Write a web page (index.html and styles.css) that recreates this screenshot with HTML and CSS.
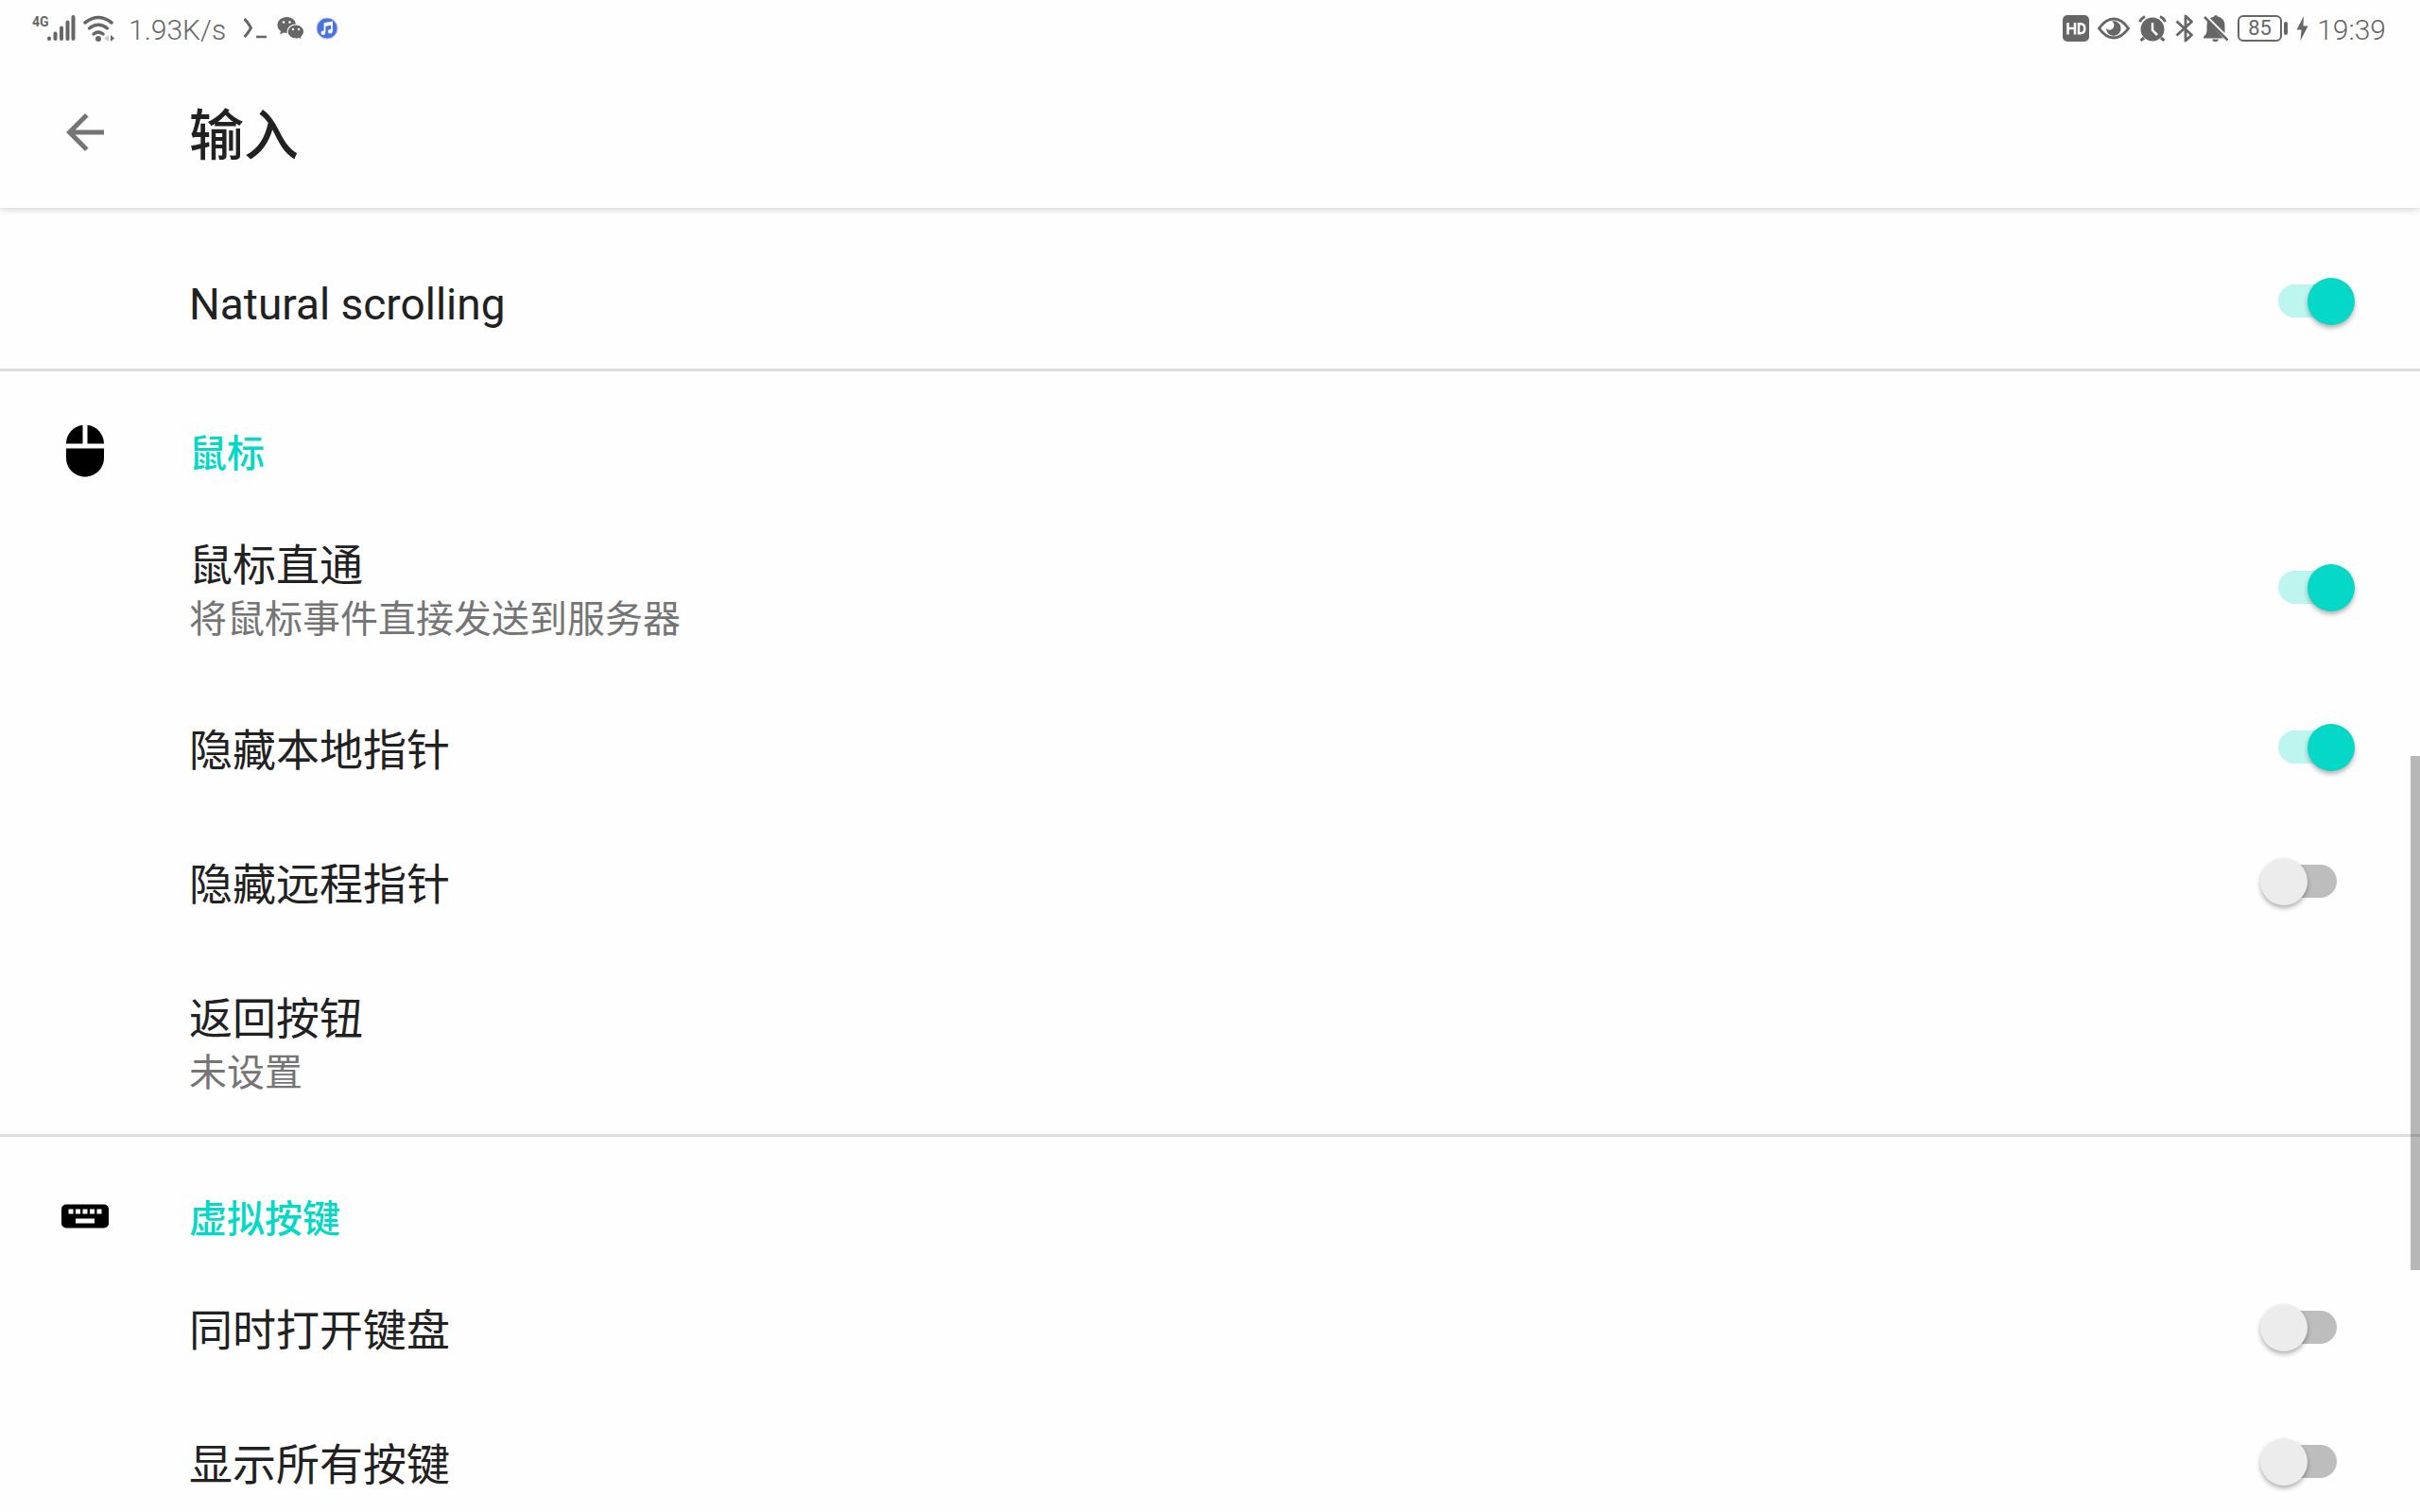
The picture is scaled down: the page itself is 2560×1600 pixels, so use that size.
FILE: index.html
```
<!DOCTYPE html>
<html lang="zh-CN">
<head>
	<meta charset="UTF-8">
	<title>输入</title>
	<meta name="viewport" content="width=device-width,initial-scale=1">
	<link rel="stylesheet" href="styles.css">
</head>
<body>
	<!-- Status bar -->
	<div class="statusbar">
		<div class="status-group">
			<svg class="icon-signal" width="46" height="32" viewBox="0 0 46 32">
				<text x="0" y="14">4G</text>
				<path d="M18 26.500v.5M24.500 21.500V27M31 15.500V27M37.500 9.500V27M43.500 4V27" fill="none" stroke="#666" stroke-width="4" stroke-linecap="round"/>
			</svg>
			<svg class="icon-wifi" width="34" height="32" viewBox="0 0 34 32">
				<g fill="none" stroke="#666" stroke-width="3.500" stroke-linecap="round">
					<path d="M2 10Q16 -1 30 10"/>
					<path d="M6.500 16Q16 8.500 25.500 16"/>
					<path d="M11 22Q16 18 21 22"/>
				</g>
				<circle cx="16" cy="27" r="3"/>
				<path d="M27 23v7l-5-3.500z" fill="#ccc"/>
				<path d="M29 23l4 3.500-4 3.500z"/>
			</svg>
			<span class="status-text speed">1.93K/s</span>
			<svg class="icon-term" width="26" height="24" viewBox="0 0 26 24" fill="none" stroke="#666">
				<path d="M1.500 2Q4 4 8.500 11.500Q4 19 1.500 21" stroke-width="3"/>
				<path d="M14 21h11" stroke-width="2.500"/>
			</svg>
			<svg class="icon-wechat" width="29" height="26" viewBox="0 0 29 26">
				<path d="M10.500 1C4.800 1 .5 4.600.5 9.400c0 2.600 1.300 4.900 3.600 6.500L3 19.500l4-2.100c1.100.3 2.300.5 3.500.5C16 17.900 20 14 20 9.400S16 1 10.500 1z"/>
				<path d="M20 9c-5 0-9 3.400-9 7.600s4 7.600 9 7.600c1.100 0 2.200-.2 3.200-.5l3.300 1.800-.9-3.100c1.900-1.400 3.100-3.500 3.100-5.800C28.700 12.400 25 9 20 9z" stroke="#fff" stroke-width="1.200"/>
				<g fill="#fff">
					<circle cx="7" cy="6.500" r="1.300"/>
					<circle cx="13.500" cy="6.500" r="1.300"/>
					<circle cx="17" cy="14" r="1.200"/>
					<circle cx="23" cy="14" r="1.200"/>
				</g>
			</svg>
			<svg class="icon-music" width="24" height="24" viewBox="0 0 24 24">
				<circle cx="12" cy="12" r="11" fill="#4674e0" stroke="#c9b5f0"/>
				<path d="M9.500 16.500V7l7.500-1.500v9.500M9.500 9l7.500-1.500" fill="none" stroke="#fff" stroke-width="1.800"/>
				<circle cx="7.800" cy="16.800" r="2.300" fill="#fff"/>
				<circle cx="15.300" cy="15.300" r="2.300" fill="#fff"/>
			</svg>
		</div>
		<div class="status-group status-right">
			<svg width="28" height="28" viewBox="0 0 28 28">
				<rect width="28" height="28" rx="5"/>
				<path d="M5.500 8v12.500M13 8v12.500M5.500 14H13M17 9.200v10h1.800q4.500 0 4.500-5t-4.500-5z" fill="none" stroke="#fff" stroke-width="2.500"/>
			</svg>
			<svg width="34" height="28" viewBox="0 0 34 28">
				<path d="M1.500 14Q8.500 4 17 4T32.500 14Q25.500 24 17 24T1.500 14z" fill="none" stroke="#666" stroke-width="3"/>
				<path d="M15 6.500a7.800 7.800 0 1 1-6 7.500 5 5 0 0 0 5 1.500 5 5 0 0 0 1-9z"/>
			</svg>
			<svg width="30" height="28" viewBox="0 0 30 28">
				<circle cx="15" cy="15" r="12.500"/>
				<path d="M1.500 7Q3 3.500 7 1.500M28.500 7Q27 3.500 23 1.500M6 24l-3.500 3M24 24l3.500 3" fill="none" stroke="#666" stroke-width="3"/>
				<path d="M15 8v8l5 5" fill="none" stroke="#fff" stroke-width="2.500"/>
			</svg>
			<svg width="20" height="30" viewBox="0 0 20 30">
				<path d="M1.500 7.500L17.500 22 11 28V2l6.500 6L1.500 22.500" fill="none" stroke="#666" stroke-width="2.800" stroke-linejoin="round"/>
			</svg>
			<svg width="28" height="28" viewBox="0 0 28 28">
				<path d="M14 0q1.500 0 2 1.500C21 2.500 23.500 6 23.500 11v8L8 3.500q2-1.600 4-2Q12.500 0 14 0z"/>
				<path d="M5.500 6L22 24.500H1V23q3.500-3 3.500-6v-6q0-3 1-5zM10 25.500h7q-1 3-3.500 3t-3.500-3z"/>
				<path d="M2 2l24.500 24.500" stroke="#666" stroke-width="2.500"/>
			</svg>
			<span class="battery"><span class="battery-level">85</span></span>
			<svg width="13" height="26" viewBox="0 0 13 26">
				<path d="M8 0L.5 14.500h5L4.500 26 12.500 10.500h-5z"/>
			</svg>
			<span class="status-text">19:39</span>
		</div>
	</div>

	<!-- App bar -->
	<header class="appbar">
		<button type="button" class="back" aria-label="返回">
			<svg width="60" height="60" viewBox="0 0 24 24"><path d="M20 11H7.830l5.590-5.590L12 4l-8 8 8 8 1.410-1.410L7.830 13H20v-2z"/></svg>
		</button>
		<h1>输入</h1>
	</header>

	<!-- Settings -->
	<main class="settings">
		<label class="row">
			<span class="text"><span class="title">Natural scrolling</span></span>
			<input type="checkbox" class="switch" checked>
		</label>

		<section>
			<div class="category">
				<svg width="60" height="60" viewBox="0 0 24 24"><path d="M13 1.070V9h7c0-4.080-3.050-7.440-7-7.930zM4 15c0 4.420 3.580 8 8 8s8-3.580 8-8v-4H4v4zm7-13.930C7.050 1.560 4 4.920 4 9h7V1.070z"/></svg>
				<h2>鼠标</h2>
			</div>
			<label class="row two-line">
				<span class="text">
					<span class="title">鼠标直通</span>
					<span class="summary">将鼠标事件直接发送到服务器</span>
				</span>
				<input type="checkbox" class="switch" checked>
			</label>
			<label class="row">
				<span class="text"><span class="title">隐藏本地指针</span></span>
				<input type="checkbox" class="switch" checked>
			</label>
			<label class="row">
				<span class="text"><span class="title">隐藏远程指针</span></span>
				<input type="checkbox" class="switch">
			</label>
			<button type="button" class="row two-line">
				<span class="text">
					<span class="title">返回按钮</span>
					<span class="summary">未设置</span>
				</span>
			</button>
		</section>

		<section>
			<div class="category">
				<svg width="60" height="60" viewBox="0 0 24 24"><path fill-rule="evenodd" d="M4 7h16a2 2 0 0 1 2 2v6a2 2 0 0 1-2 2H4a2 2 0 0 1-2-2V9a2 2 0 0 1 2-2zM5 9v2h2V9zM8 9v2h2V9zM11 9v2h2V9zM14 9v2h2V9zM17 9v2h2V9zM8 13v2h8v-2z"/></svg>
				<h2>虚拟按键</h2>
			</div>
			<label class="row">
				<span class="text"><span class="title">同时打开键盘</span></span>
				<input type="checkbox" class="switch">
			</label>
			<label class="row">
				<span class="text"><span class="title">显示所有按键</span></span>
				<input type="checkbox" class="switch">
			</label>
		</section>
	</main>
	<div class="scrollbar"></div>
</body>
</html>
```
FILE: styles.css
```
* {
	box-sizing: border-box;
}

body {
	display: flex;
	flex-direction: column;
	position: relative;
	height: 100vh;
	margin: 0;
	overflow: hidden;
	background: #fefefe;
	color: #212121;
	font-family: Roboto, "Noto Sans CJK SC", sans-serif;
}

svg {
	display: block;
	flex: none;
}

button {
	border: 0;
	padding: 0;
	background: none;
	color: inherit;
	font: inherit;
	text-align: left;
}

/* Status bar */
.statusbar {
	display: flex;
	justify-content: space-between;
	flex: none;
	height: 60px;
	padding: 0 36px 0 34px;
	color: #666;
	fill: #666;
}
.status-group {
	display: flex;
	align-items: center;
}
.status-right {
	gap: 9px;
}
.status-text {
	padding-top: 2px;
	font-size: 30px;
	font-weight: 300;
}
.icon-signal text {
	font-size: 14px;
	font-weight: bold;
}
.icon-wifi {
	margin-left: 8px;
}
.speed {
	margin-left: 14px;
}
.icon-term {
	margin-left: 18px;
}
.icon-wechat {
	margin-left: 10px;
}
.icon-music {
	margin-left: 12px;
}
.battery {
	display: flex;
	align-items: center;
}
.battery::after {
	content: "";
	width: 4px;
	height: 14px;
	margin-left: 2px;
	border-radius: 2px;
	background: #666;
}
.battery-level {
	width: 47px;
	height: 28px;
	border: 2px solid #666;
	border-radius: 6px;
	font-size: 22px;
	line-height: 24px;
	text-align: center;
}

/* App bar */
.appbar {
	display: flex;
	align-items: center;
	gap: 80px;
	flex: none;
	height: 160px;
	padding: 0 60px;
	box-shadow: 0 1px 8px rgba(0, 0, 0, 0.2);
	clip-path: inset(0 0 -12px); /* shadow only below the bar */
}
.back {
	fill: #757575;
}
h1 {
	margin: 0;
	padding-top: 8px;
	font-size: 58px;
	font-weight: 500;
	line-height: 72px;
}

/* Settings */
.settings {
	flex: 1;
	min-height: 0;
	padding-top: 28px;
	overflow: hidden;
}
.category {
	display: flex;
	gap: 80px;
	height: 134px;
	padding: 54px 60px 0;
	border-top: 3px solid #dedede;
}
h2 {
	margin: 0;
	padding-top: 4px;
	color: #05d8c6;
	font-size: 40px;
	font-weight: 500;
	line-height: 60px;
}
.row {
	display: flex;
	align-items: center;
	justify-content: space-between;
	width: 100%;
	height: 142px;
	padding: 0 88px 2px 200px;
}
.two-line {
	height: 196px;
}
.text {
	display: flex;
	flex-direction: column;
	padding-top: 8px;
}
.title {
	font-size: 46px;
	line-height: 62px;
}
.summary {
	color: #757575;
	font-size: 40px;
	line-height: 54px;
}

/* Switch: the thumb sticks out past the ends of the track */
.switch {
	appearance: none;
	position: relative;
	flex: none;
	width: 62px;
	height: 35px;
	margin: 0;
	border-radius: 18px;
	background: #bdbdbd;
}
.switch::before {
	content: "";
	position: absolute;
	top: -7px;
	left: -19px;
	width: 50px;
	height: 50px;
	border-radius: 50%;
	background: #ececec;
	box-shadow: 0 3px 5px rgba(0, 0, 0, 0.3);
}
.switch:checked {
	background: #bdf5ef;
}
.switch:checked::before {
	left: 31px;
	background: #05d8c6;
}

.scrollbar {
	position: absolute;
	top: 50%;
	right: 0;
	width: 10px;
	height: 34%;
	background: rgba(0, 0, 0, 0.28);
}
```
